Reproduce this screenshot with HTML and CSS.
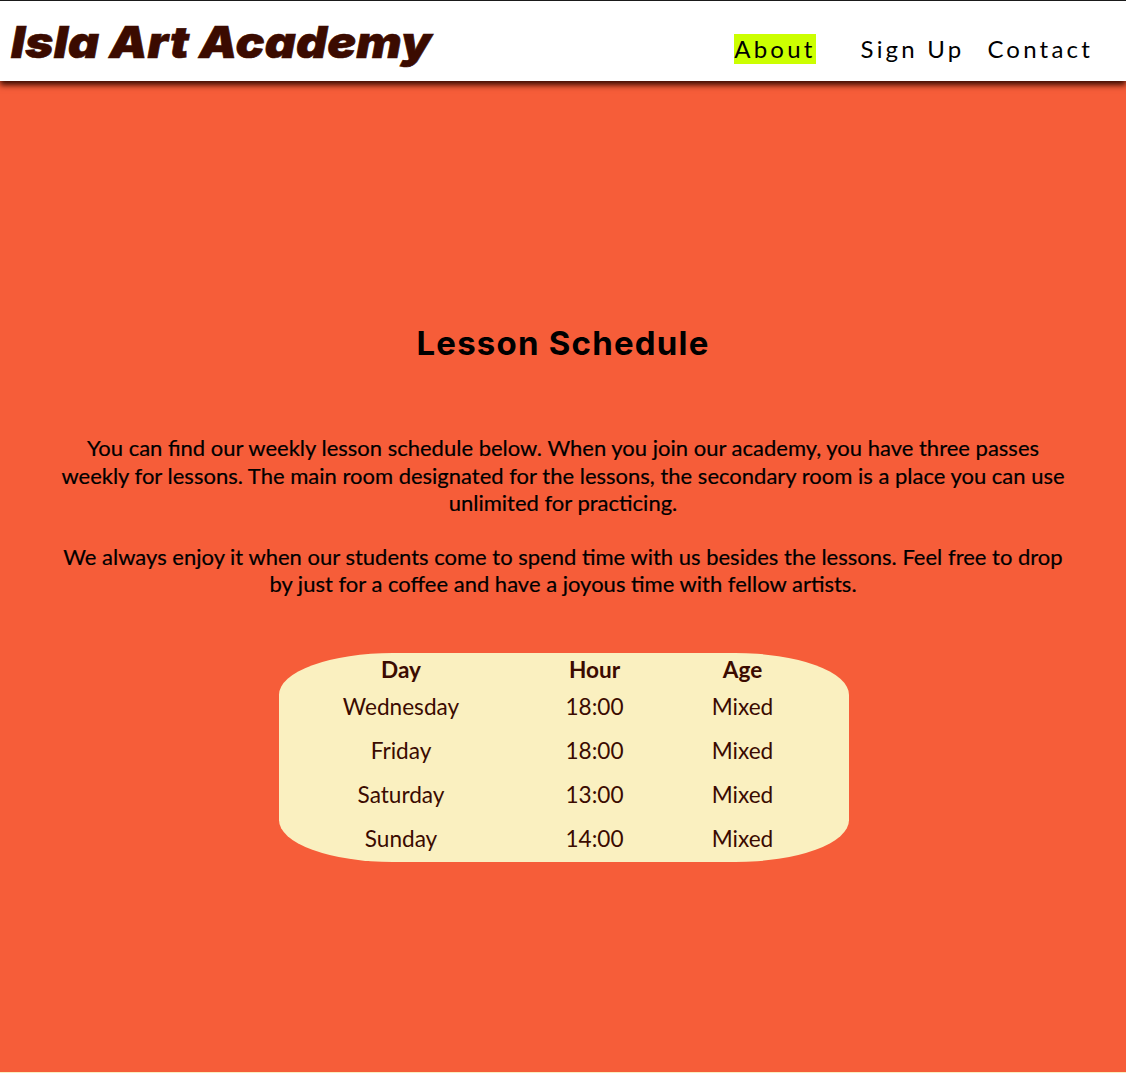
FILE: index.html
```html
<!DOCTYPE html>
<html lang="en">
<head>
  <meta charset="UTF-8" />
  <meta name="viewport" content="width=device-width, initial-scale=1.0" />
  <title>Isla Art Academy</title>
  <link rel="stylesheet" href="styles.css">
</head>
<body>
  <header class="topbar">
    <h1 class="logo">Isla Art Academy</h1>
    <nav class="nav">
      <a class="nav-link active" href="#">About</a>
      <a class="nav-link" href="#">Sign Up</a>
      <a class="nav-link" href="#">Contact</a>
    </nav>
  </header>

  <main class="content">
    <h2 class="title">Lesson Schedule</h2>

    <p class="intro">You can find our weekly lesson schedule below. When you join our academy, you have three passes weekly for lessons. The main room designated for the lessons, the secondary room is a place you can use unlimited for practicing.</p>
    <p class="intro">We always enjoy it when our students come to spend time with us besides the lessons. Feel free to drop by just for a coffee and have a joyous time with fellow artists.</p>

    <div class="schedule">
      <table>
        <thead>
          <tr><th class="col-day">Day</th><th class="col-hour">Hour</th><th class="col-age">Age</th></tr>
        </thead>
        <tbody>
          <tr><td>Wednesday</td><td>18:00</td><td>Mixed</td></tr>
          <tr><td>Friday</td><td>18:00</td><td>Mixed</td></tr>
          <tr><td>Saturday</td><td>13:00</td><td>Mixed</td></tr>
          <tr><td>Sunday</td><td>14:00</td><td>Mixed</td></tr>
        </tbody>
      </table>
    </div>
  </main>
</body>
</html>
```

FILE: styles.css
```css
* {
  box-sizing: border-box;
}
body {
  margin: 0;
  font-family: Lato, "Open Sans", sans-serif;
  background-color: #faf0c0;
  color: #000;
}
.topbar {
  position: relative;
  display: flex;
  justify-content: space-between;
  height: 81px;
  padding: 0 33px 0 11px;
  background: white;
  border-top: 1px solid #1a1a1a;
  box-shadow: 0 4px 6px #3b0b00;
}
.logo {
  margin: 14px 0 0;
  font-family: Inter, Roboto, sans-serif;
  font-size: 44px;
  line-height: 54px;
  font-weight: 900;
  font-style: italic;
  letter-spacing: 0.2px;
  color: #3b0b00;
  -webkit-text-stroke: 0.6px #3b0b00;
  transform: scaleX(1.093);
  transform-origin: left center;
}
.nav {
  display: flex;
  align-items: flex-start;
  padding-top: 33px;
}
.nav-link {
  margin-left: 23px;
  font-size: 24px;
  line-height: 30px;
  letter-spacing: 3.2px;
  color: #000;
  text-decoration: none;
}
.nav-link.active {
  margin-right: 22px;
  background-color: #ccff00;
}
.content {
  height: 991px;
  padding: 242px 58px 0;
  background-color: #f65d39;
  text-align: center;
}
.title {
  margin: 0 0 71px;
  font-family: Inter, Roboto, sans-serif;
  font-size: 33px;
  line-height: 40px;
  font-weight: 700;
  letter-spacing: 1.2px;
}
.intro {
  margin: 0 0 26px;
  font-size: 22px;
  line-height: 27.5px;
  -webkit-text-stroke: 0.2px #000;
}
.schedule {
  width: 570px;
  height: 209px;
  margin: 55px 0 0 221px;
  padding-right: 30px;
  background-color: #faf0c0;
  border-radius: 20%;
  color: #3b0b00;
}
.schedule table {
  width: 100%;
  border-collapse: collapse;
  table-layout: fixed;
  font-size: 22.6px;
}
.schedule th {
  height: 32px;
  padding: 2px 0 0;
  font-weight: 700;
}
.schedule td {
  height: 44px;
  padding: 0;
}
.col-day {
  width: 244px;
}
.col-hour {
  width: 143px;
}
```
